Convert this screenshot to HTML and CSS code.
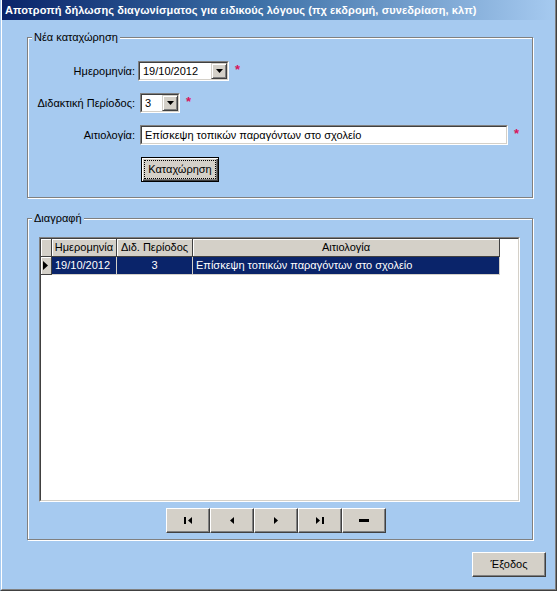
FILE: index.html
```html
<!DOCTYPE html>
<html lang="el">
<head>
<meta charset="utf-8">
<title>Αποτροπή δήλωσης διαγωνίσματος</title>
<link rel="stylesheet" href="styles.css">
</head>
<body>
<div class="window">
  <div class="frame">
    <div class="titlebar">Αποτροπή δήλωσης διαγωνίσματος για ειδικούς λόγους (πχ εκδρομή, συνεδρίαση, κλπ)</div>
    <div class="content">
      <fieldset class="group group-new">
        <legend>Νέα καταχώρηση</legend>
        <div class="form">
          <label class="lbl">Ημερομηνία:</label>
          <div class="field">
            <div class="combo combo-date"><div class="combo-in"><span class="combo-text">19/10/2012</span><span class="drop"><svg width="7" height="4" viewBox="0 0 7 4"><polygon points="0,0 7,0 3.5,4" fill="#000"/></svg></span></div></div>
            <span class="req">*</span>
          </div>
          <label class="lbl">Διδακτική Περίοδος:</label>
          <div class="field">
            <div class="combo combo-period"><div class="combo-in"><span class="combo-text">3</span><span class="drop"><svg width="7" height="4" viewBox="0 0 7 4"><polygon points="0,0 7,0 3.5,4" fill="#000"/></svg></span></div></div>
            <span class="req">*</span>
          </div>
          <label class="lbl">Αιτιολογία:</label>
          <div class="field">
            <div class="combo text-input"><div class="combo-in"><span class="combo-text">Επίσκεψη τοπικών παραγόντων στο σχολείο</span></div></div>
            <span class="req">*</span>
          </div>
          <div></div>
          <div class="field">
            <button class="btn btn-default"><span class="focus">Καταχώρηση</span></button>
          </div>
        </div>
      </fieldset>

      <fieldset class="group group-del">
        <legend>Διαγραφή</legend>
        <div class="grid"><div class="grid-in">
          <table class="table">
            <colgroup><col class="c-sel"><col class="c-date"><col class="c-per"><col class="c-reason"></colgroup>
            <thead>
              <tr><th class="sel"></th><th>Ημερομηνία</th><th>Διδ. Περίοδος</th><th>Αιτιολογία</th></tr>
            </thead>
            <tbody>
              <tr class="selected">
                <td class="sel"><svg width="5" height="9" viewBox="0 0 5 9"><polygon points="0,0 5,4.5 0,9" fill="#000"/></svg></td>
                <td class="left">19/10/2012</td>
                <td class="center">3</td>
                <td class="left">Επίσκεψη τοπικών παραγόντων στο σχολείο</td>
              </tr>
            </tbody>
          </table>
        </div></div>
        <div class="nav">
          <button class="btn nav-btn"><svg width="9" height="7" viewBox="0 0 9 7"><rect x="0" y="0" width="2" height="7" fill="#000"/><polygon points="4,3.5 8,0 8,7" fill="#000"/></svg></button>
          <button class="btn nav-btn"><svg width="5" height="7" viewBox="0 0 5 7"><polygon points="0,3.5 4,0 4,7" fill="#000"/></svg></button>
          <button class="btn nav-btn"><svg width="5" height="7" viewBox="0 0 5 7"><polygon points="0,0 4,3.5 0,7" fill="#000"/></svg></button>
          <button class="btn nav-btn"><svg width="9" height="7" viewBox="0 0 9 7"><polygon points="0,0 4,3.5 0,7" fill="#000"/><rect x="6" y="0" width="2" height="7" fill="#000"/></svg></button>
          <button class="btn nav-btn"><svg width="10" height="3" viewBox="0 0 10 3"><rect x="0" y="0" width="10" height="3" fill="#000"/></svg></button>
        </div>
      </fieldset>

      <div class="footer">
        <button class="btn btn-exit">Έξοδος</button>
      </div>
    </div>
  </div>
</div>
</body>
</html>
```

FILE: styles.css
```css
html, body {
  margin: 0;
  padding: 0;
  background: #A6CAF0;
}

.window {
  width: 557px;
  height: 591px;
  box-sizing: border-box;
  background: #A6CAF0;
  border-left: 1px solid #A6CAF0;
  border-right: 1px solid #404040;
  border-bottom: 1px solid #404040;
  font-family: "Liberation Sans", Arial, sans-serif;
  font-size: 11px;
  line-height: 13px;
  color: #000;
  overflow: hidden;
}

.frame {
  height: 100%;
  box-sizing: border-box;
  border-left: 1px solid #ffffff;
  border-right: 1px solid #808080;
  border-bottom: 1px solid #808080;
}

.titlebar {
  height: 20px;
  line-height: 20px;
  padding-left: 3px;
  background: linear-gradient(to right, #0A246A 0%, #3A6EA5 45%, #A6CAF0 100%);
  color: #ffffff;
  font-weight: bold;
  font-size: 11px;
  letter-spacing: 0.1px;
  white-space: nowrap;
  overflow: hidden;
}

.content {
  padding: 11px 0 0 25px;
}

.group {
  margin: 0;
  padding: 0;
  width: 506px;
  box-sizing: border-box;
  border: 1px solid #808080;
  box-shadow: inset 1px 1px 0 #ffffff, 1px 1px 0 #ffffff;
  min-inline-size: 0;
}

.group legend {
  margin-left: 4px;
  padding: 0 2px;
  line-height: 13px;
  background: #A6CAF0;
}

.group-del {
  margin-top: 14px;
}

.form {
  display: grid;
  grid-template-columns: 107px auto;
  column-gap: 4px;
  row-gap: 12px;
  align-items: center;
  padding: 17px 0 15px 0;
}

.lbl {
  text-align: right;
  white-space: nowrap;
}

.field {
  display: flex;
  align-items: center;
  gap: 6px;
}

.req {
  color: #D8145A;
  font-size: 13px;
  font-weight: bold;
  line-height: 13px;
  position: relative;
  top: -2px;
}

.combo {
  height: 20px;
  box-sizing: border-box;
  border: 1px solid;
  border-color: #808080 #ffffff #ffffff #808080;
  background: #ffffff;
}

.combo-in {
  height: 100%;
  box-sizing: border-box;
  border: 1px solid;
  border-color: #404040 #D4D0C8 #D4D0C8 #404040;
  display: flex;
  align-items: center;
}

.combo-text {
  flex: 1;
  padding-left: 3px;
  white-space: nowrap;
  overflow: hidden;
}

.combo-date { width: 91px; margin-left: -1px; }
.combo-period { width: 40px; margin-left: 1px; }
.text-input { width: 368px; margin-left: 1px; }

.drop {
  width: 16px;
  height: 16px;
  box-sizing: border-box;
  background: #D4D0C8;
  border: 1px solid;
  border-color: #D4D0C8 #404040 #404040 #D4D0C8;
  box-shadow: inset 1px 1px 0 #ffffff, inset -1px -1px 0 #808080;
  display: flex;
  align-items: center;
  justify-content: center;
}

.btn {
  font-family: "Liberation Sans", Arial, sans-serif;
  font-size: 11px;
  line-height: 13px;
  color: #000;
  background: #D4D0C8;
  border: 1px solid;
  border-color: #ffffff #404040 #404040 #ffffff;
  box-shadow: inset -1px -1px 0 #808080;
  padding: 0;
  margin: 0;
  box-sizing: border-box;
  display: flex;
  align-items: center;
  justify-content: center;
}

.btn-default {
  width: 78px;
  height: 25px;
  margin-left: 2px;
  border: 1px solid #000000;
  box-shadow: inset 1px 1px 0 #ffffff, inset -1px -1px 0 #404040, inset -2px -2px 0 #808080;
  align-items: stretch;
  justify-content: stretch;
}

.focus {
  flex: 1;
  margin: 2px;
  border: 1px dotted #000;
  display: flex;
  align-items: center;
  justify-content: center;
}

.grid {
  margin: 12px 0 0 11px;
  width: 481px;
  height: 265px;
  box-sizing: border-box;
  border: 1px solid;
  border-color: #808080 #ffffff #ffffff #808080;
  background: #ffffff;
}

.grid-in {
  height: 100%;
  box-sizing: border-box;
  border: 1px solid;
  border-color: #404040 #D4D0C8 #D4D0C8 #404040;
}

.table {
  border-collapse: separate;
  border-spacing: 0;
  table-layout: fixed;
  width: 459px;
}

.c-sel { width: 11px; }
.c-date { width: 65px; }
.c-per { width: 76px; }
.c-reason { width: 307px; }

.table th {
  height: 18px;
  box-sizing: border-box;
  padding: 0;
  font-weight: normal;
  text-align: center;
  background: #D4D0C8;
  border-right: 1px solid #404040;
  border-bottom: 1px solid #404040;
  box-shadow: inset 1px 1px 0 #ffffff;
  white-space: nowrap;
  overflow: hidden;
}

.table td {
  height: 18px;
  box-sizing: border-box;
  padding: 0 3px;
  white-space: nowrap;
  overflow: hidden;
}

.selected td {
  background: #0A246A;
  color: #ffffff;
  border-right: 1px solid #D4D0C8;
  border-bottom: 1px solid #D4D0C8;
}

.selected td.sel {
  background: #D4D0C8;
  border-right: 1px solid #404040;
  border-bottom: 1px solid #404040;
  box-shadow: inset 1px 1px 0 #ffffff;
  padding: 0 0 0 2px;
  vertical-align: middle;
}

.selected td.sel svg { display: block; }

.left { text-align: left; }
.center { text-align: center; }

.nav {
  display: flex;
  margin: 6px 0 6px 138px;
}

.nav-btn {
  width: 44px;
  height: 25px;
}

.footer {
  display: flex;
  justify-content: flex-end;
  margin-top: 12px;
  padding-right: 9px;
}

.btn-exit {
  width: 74px;
  height: 25px;
}
```
